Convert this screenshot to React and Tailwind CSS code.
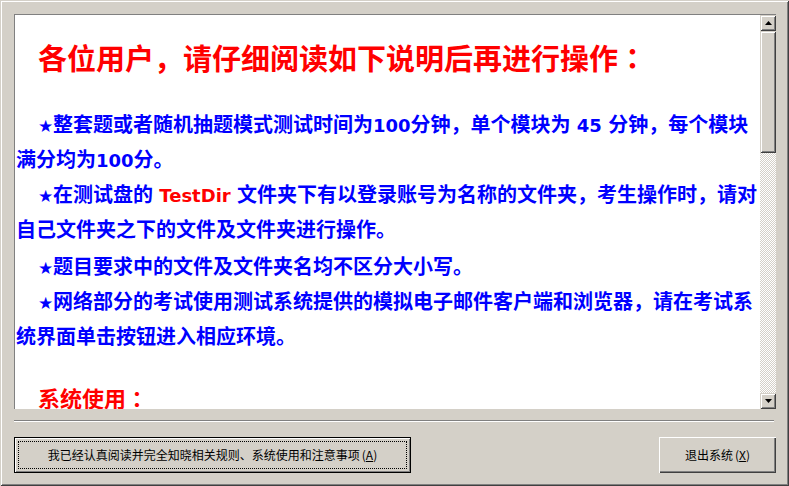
import React from 'react';

const cjk = "font-['Noto_Sans_CJK_SC',sans-serif]";

// classic raised 3d edge
const raised =
  'shadow-[inset_1px_1px_0_#d4d0c8,inset_-1px_-1px_0_#404040,inset_2px_2px_0_#ffffff,inset_-2px_-2px_0_#808080]';

const Latin = ({ children }) => (
  <span className="font-['DejaVu_Sans',sans-serif] text-[18px]">{children}</span>
);

// centred full-width colon, as in the original dialog
const Colon = () => <span className="font-['Noto_Sans_CJK_TC',sans-serif]">：</span>;

const Star = () => (
  <span className="inline-block w-[15px] ml-[22px] text-[17px] font-['DejaVu_Sans',sans-serif]">★</span>
);

const Line = ({ children }) => (
  <div className="h-[35px] leading-[35px] whitespace-nowrap">{children}</div>
);

const Arrow = ({ down }) => (
  <svg width="7" height="4" viewBox="0 0 7 4">
    {down ? <path d="M0 0h7L3.5 4z" fill="#000" /> : <path d="M0 4h7L3.5 0z" fill="#000" />}
  </svg>
);

const ScrollBar = () => (
  <div className="w-[16px] h-full flex flex-col bg-[repeating-conic-gradient(#ffffff_0%_25%,#d4d0c8_0%_50%)] bg-[length:2px_2px]">
    <div className={`h-[16px] bg-[#d4d0c8] flex items-center justify-center ${raised}`}>
      <Arrow />
    </div>
    <div className={`h-[122px] bg-[#d4d0c8] ${raised}`} />
    <div className="flex-1" />
    <div className={`h-[16px] bg-[#d4d0c8] flex items-center justify-center ${raised}`}>
      <Arrow down />
    </div>
  </div>
);

const App = () => {
  return (
    <div className={`w-[789px] h-[486px] bg-[#d4d0c8] flex flex-col ${cjk} ${raised}`}>
      {/* notice text box */}
      <div className="mt-[14px] ml-[14px] w-[762px] h-[395px] flex border-l border-t border-[#808080]">
        <div className="flex-1 bg-white overflow-hidden pl-[1px] font-bold text-[20px] text-[#0000ff]">
          <div className="pt-[28px] pl-[22px] h-[57px] leading-[29px] text-[29px] text-[#ff0000] whitespace-nowrap">
            各位用户，请仔细阅读如下说明后再进行操作<Colon />
          </div>
          <div className="mt-[34px]">
            <Line>
              <Star />整套题或者随机抽题模式测试时间为<Latin>100</Latin>分钟，单个模块为<Latin> 45 </Latin>分钟，每个模块
            </Line>
            <Line>满分均为<Latin>100</Latin>分。</Line>
            <Line>
              <Star />在测试盘的<Latin> </Latin>
              <span className="text-[#ff0000]"><Latin>TestDir</Latin></span>
              <Latin> </Latin>文件夹下有以登录账号为名称的文件夹，考生操作时，请对
            </Line>
            <Line>自己文件夹之下的文件及文件夹进行操作。</Line>
            <div className="mt-[2px]">
              <Line>
                <Star />题目要求中的文件及文件夹名均不区分大小写。
              </Line>
            </div>
            <Line>
              <Star />网络部分的考试使用测试系统提供的模拟电子邮件客户端和浏览器，请在考试系
            </Line>
            <Line>统界面单击按钮进入相应环境。</Line>
          </div>
          <div className="mt-[27px] pl-[22px] h-[35px] leading-[35px] text-[22px] text-[#ff0000] whitespace-nowrap">
            系统使用<Colon />
          </div>
        </div>
        <ScrollBar />
      </div>

      {/* separator */}
      <div className="mt-[11px] ml-[14px] w-[760px] h-[2px] border-t border-[#808080] border-b border-b-white" />

      {/* buttons */}
      <div className="mt-[15px] px-[14px] flex justify-between text-[12px] text-black">
        <div className="w-[397px] h-[36px] border border-black">
          <div className="h-full p-[3px] shadow-[inset_1px_1px_0_#ffffff,inset_-1px_-1px_0_#808080]">
            <div className="h-full border border-dotted border-black flex items-center justify-center">
              我已经认真阅读并完全知晓相关规则、系统使用和注意事项<span className="ml-[2px]">(<span className="underline">A</span>)</span>
            </div>
          </div>
        </div>
        <div className="w-[117px] h-[36px] mr-[-1px] flex items-center justify-center shadow-[inset_1px_1px_0_#ffffff,inset_-1px_-1px_0_#404040,inset_-2px_-2px_0_#808080]">
          退出系统<span className="ml-[2px]">(<span className="underline">X</span>)</span>
        </div>
      </div>
    </div>
  );
};

export default App;
